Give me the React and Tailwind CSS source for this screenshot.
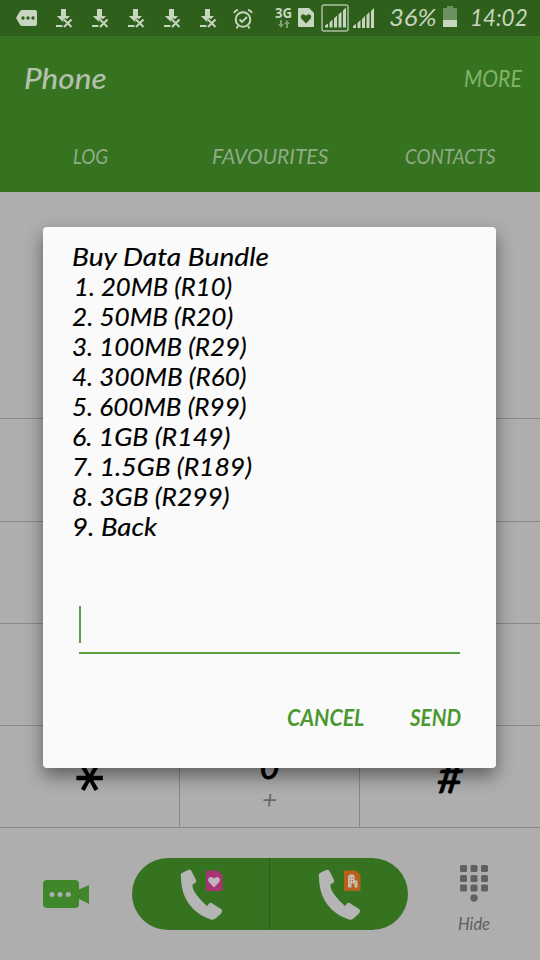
import { useLayoutEffect, useRef, useState } from 'react';

const bundles = [
  { text: 'Buy Data Bundle', width: 197, indent: 0 },
  { text: '1. 20MB (R10)', width: 158, indent: 2 },
  { text: '2. 50MB (R20)', width: 161, indent: 0 },
  { text: '3. 100MB (R29)', width: 175, indent: 0 },
  { text: '4. 300MB (R60)', width: 175, indent: 0 },
  { text: '5. 600MB (R99)', width: 175, indent: 0 },
  { text: '6. 1GB (R149)', width: 158, indent: 0 },
  { text: '7. 1.5GB (R189)', width: 180, indent: 0 },
  { text: '8. 3GB (R299)', width: 158, indent: 0 },
  { text: '9. Back', width: 85, indent: 0 },
];

// Stretches or squeezes one line of text to a fixed width
function Fit({ width, indent, className = '', children }) {
  const ref = useRef(null);
  const [scale, setScale] = useState(1);

  useLayoutEffect(() => {
    setScale(width / ref.current.offsetWidth);
  }, [width]);

  return (
    <span className={`block whitespace-nowrap ${className}`} style={{ width, marginLeft: indent }}>
      <span ref={ref} className="inline-block origin-left" style={{ transform: `scaleX(${scale})` }}>
        {children}
      </span>
    </span>
  );
}

function DownloadFailed() {
  return (
    <svg width="17" height="19" viewBox="0 0 17 19" className="mr-[19px] shrink-0">
      <path d="M5 0h5v7h4l-3 3-3.500 3.500L.8 7H5z" fill="#c6d6bf" />
      <path d="M0 17h6.500" stroke="#c6d6bf" strokeWidth="2" />
      <path d="M8 10.500l7.500 7.500M15.500 10.500L8 18" stroke="#2e5f1b" strokeWidth="4" />
      <path d="M8 10.500l7.500 7.500M15.500 10.500L8 18" stroke="#c6d6bf" strokeWidth="2" />
    </svg>
  );
}

function Bars() {
  return (
    <>
      <path d="M0 20v-2l3-2v4z" />
      <path d="M4.500 20v-5l3-3v8zM9 20v-9l3-3v12zM13.500 20V7l3-3v16zM18 20V3l3-3v20z" />
    </>
  );
}

function StatusBar() {
  return (
    <div className="flex h-9 items-start bg-[#2e5f1b] text-[#c6d6bf]">
      <svg width="21" height="16" viewBox="0 0 21 16" className="mt-[10px] ml-4 mr-[19px] shrink-0">
        <path d="M6 0h13q2 0 2 2v12q0 2-2 2H6q-1.500 0-2.500-2L0 8l3.500-6Q4.500 0 6 0z" fill="#c6d6bf" />
        <g fill="#2e5f1b">
          <circle cx="7" cy="8" r="1.700" />
          <circle cx="12" cy="8" r="1.700" />
          <circle cx="17" cy="8" r="1.700" />
        </g>
      </svg>
      <div className="mt-[9px] flex">
        {[1, 2, 3, 4, 5].map((n) => <DownloadFailed key={n} />)}
      </div>
      <svg width="20" height="20" viewBox="0 0 20 20" fill="none" stroke="#c6d6bf" className="mt-[9px] ml-[-3px] shrink-0">
        <circle cx="10" cy="10.500" r="7.300" strokeWidth="2" />
        <path d="M6.500 10.500l2.500 2.500 5-5" strokeWidth="1.800" />
        <path d="M1 4Q2 1.500 5 .8M15 .8q3 .7 4 3.200M5 17l-1.500 2.500M15 17l1.500 2.500" strokeWidth="1.800" />
      </svg>
      <div className="mt-[6px] ml-[22px] w-[18px] shrink-0 font-['Noto_Sans'] text-[14px] leading-[13px] font-bold not-italic">
        <Fit width={17}>3G</Fit>
        <svg width="12" height="8" viewBox="0 0 12 8" className="mt-px ml-[3px]">
          <path d="M2 0h2v4h2L3 8 0 4h2zM8 8h2V4h2L9 0 6 4h2z" fill="#7d9e70" />
        </svg>
      </div>
      <svg width="16" height="19" viewBox="0 0 16 19" className="mt-2 ml-[5px] shrink-0">
        <path d="M1 0h10l5 5v13q0 1-1 1H1q-1 0-1-1V1q0-1 1-1z" fill="#c6d6bf" />
        <path d="M8 15.500L3.300 10.500Q2 8.500 3.500 7 5.500 5 8 7.700 10.500 5 12.500 7q1.500 1.500.2 3.500z" fill="#2e5f1b" />
      </svg>
      <svg width="28" height="28" viewBox="0 0 28 28" className="mt-[4px] ml-[7px] shrink-0" fill="#c6d6bf">
        <rect x="1" y="1" width="26" height="26" rx="2" fill="none" stroke="#a9c09f" strokeWidth="1.500" />
        <g transform="translate(4 3.500)"><Bars /></g>
      </svg>
      <svg width="21" height="20" viewBox="0 0 21 20" className="mt-2 ml-[4px] shrink-0" fill="#c6d6bf"><Bars /></svg>
      <Fit width={48} className="mt-[3px] ml-[15px] shrink-0 text-[24px] leading-7">36%</Fit>
      <svg width="14" height="21" viewBox="0 0 14 21" className="mt-[6px] ml-[6px] shrink-0">
        <path d="M4 0h6v2h4v12H0V2h4z" fill="#6d9060" />
        <path d="M0 14h14v7H0z" fill="#c6d6bf" />
      </svg>
      <Fit width={58} className="mt-[3px] ml-[13px] shrink-0 text-[24px] leading-7">14:02</Fit>
    </div>
  );
}

function Header() {
  return (
    <div className="h-[156px] border-t border-[#3a7428] bg-[#367321]">
      <div className="flex h-[82px] items-center justify-between pr-[18px] pl-6">
        <Fit width={83} className="text-[28px] font-medium text-[#b4c1ae]">Phone</Fit>
        <Fit width={58} className="text-[23px] text-[#82b367]">MORE</Fit>
      </div>
      <div className="grid h-[70px] grid-cols-3 justify-items-center pt-[23px] text-[21px] leading-7 text-[#91ab86]">
        <Fit width={35}>LOG</Fit>
        <Fit width={116}>FAVOURITES</Fit>
        <Fit width={91}>CONTACTS</Fit>
      </div>
    </div>
  );
}

function Keypad() {
  return (
    <div className="h-[636px]">
      <div className="h-[227px] border-b border-[#888]" />
      <div className="h-[103px] border-b border-[#888]" />
      <div className="h-[102px] border-b border-[#888]" />
      <div className="h-[102px] border-b border-[#888]" />
      <div className="grid h-[102px] grid-cols-3 border-b border-[#888] text-center text-black">
        <div className="flex justify-center border-r border-[#888] pt-[30px]">
          <span className="flex h-11 w-11 rotate-90 justify-center font-['DejaVu_Sans'] text-[55px] leading-[64px] not-italic [-webkit-text-stroke:1.2px]">*</span>
        </div>
        <div className="border-r border-[#888] pt-[20px]">
          <div className="h-[40px] text-[34px] leading-[40px] [-webkit-text-stroke:1px]">0</div>
          <div className="text-[26px] leading-[26px] text-[#6a6a6a]">+</div>
        </div>
        <div className="pt-[27px] text-[44px] leading-[46px] [-webkit-text-stroke:1px]">#</div>
      </div>
    </div>
  );
}

function CallHalf({ badge, children }) {
  return (
    <svg width="138" height="72" viewBox="0 0 138 72" className="shrink-0">
      <path
        d="M49 19Q48 16 50 15L56 12Q59 11 60 14L64 22Q65 24 63 25L60.500 26.500Q60 31 65 37.500Q70 44 75 48L77 45.500Q79 44 81 46L89 51Q91 53 89 55.500L84 60Q82 62.500 79 61.500C62 56 49 42 49 19z"
        fill="#b5b5b5"
      />
      <path d="M75 12.500h11l4.500 4.500v15q0 1-1 1H75q-1 0-1-1V13.500q0-1 1-1z" fill={badge} />
      {children}
    </svg>
  );
}

function CallBar() {
  return (
    <div className="flex h-[132px]">
      <svg width="46" height="28" viewBox="0 0 46 28" className="mt-[52px] ml-[43px]">
        <rect width="36" height="28" rx="4" fill="#3f872a" />
        <path d="M36 19v-9.500L46 5v19z" fill="#3f872a" />
        <g fill="#aeaeae">
          <circle cx="9" cy="14.500" r="2.500" />
          <circle cx="17" cy="14.500" r="2.500" />
          <circle cx="25.300" cy="14.500" r="2.500" />
        </g>
      </svg>
      <div className="mt-[30px] ml-[43px] flex h-[72px] w-[276px] overflow-hidden rounded-full bg-[#367321]">
        <CallHalf badge="#a83474">
          <path d="M82 29.500l-5-5.300q-2-3 .3-4.700 2.600-1.500 4.700 1 2.100-2.500 4.700-1 2.300 1.700.3 4.700z" fill="#c0b5ba" />
        </CallHalf>
        <div className="-ml-px h-full w-px shrink-0 bg-[#2a5b19]" />
        <CallHalf badge="#b5601b">
          <path d="M78 29.500V18.500l1.500-2h4l1 2V22l3 1v6.500h-3V26h-3v3.500z" fill="#c9c0b6" />
          <path d="M79.700 20h1m1.300 0h1m-3.300 2.500h1m1.300 0h1m-3.300 2.500h1m1.300 0h1m1.500 0h1" stroke="#a9540f" />
        </CallHalf>
      </div>
      <div className="ml-[50px] flex w-[32px] flex-col items-center pt-[37px]">
        <svg width="28" height="38" viewBox="0 0 28 38" fill="#606060" className="shrink-0">
          {[0, 10, 19.500].map((y) => [0, 10.500, 21].map((x) => (
            <rect key={`${x}-${y}`} x={x} y={y} width="7" height="7" rx="1.500" />
          )))}
          <circle cx="14" cy="33" r="3.700" />
        </svg>
        <Fit width={32} className="mt-[11px] text-[17px] leading-5 text-[#606060]">Hide</Fit>
      </div>
    </div>
  );
}

function BundleDialog() {
  return (
    <div className="absolute top-[227px] left-[43px] h-[541px] w-[453px] rounded-[4px] bg-[#fafafa] pt-[14px] shadow-[0_8px_18px_rgba(0,0,0,0.45)]">
      <div className="pl-[29px] text-[25px] leading-[30px] text-black [-webkit-text-stroke:0.15px]">
        {bundles.map((line) => (
          <Fit key={line.text} width={line.width} indent={line.indent}>{line.text}</Fit>
        ))}
      </div>
      <div className="mt-[65px] ml-9 h-[48px] w-[381px] border-b-2 border-[#57a03e]">
        <div className="h-[37px] w-0.5 bg-[#57a03e]" />
      </div>
      <div className="mt-[47px] flex justify-end gap-[46px] pr-[35px] text-[23px] leading-8 font-bold text-[#4a982f]">
        <Fit width={77}>CANCEL</Fit>
        <Fit width={51}>SEND</Fit>
      </div>
    </div>
  );
}

export default function App() {
  return (
    <div className="relative h-[960px] w-[540px] overflow-hidden bg-[#aeaeae] font-['Lato',sans-serif] italic">
      <StatusBar />
      <Header />
      <Keypad />
      <CallBar />
      <BundleDialog />
    </div>
  );
}
